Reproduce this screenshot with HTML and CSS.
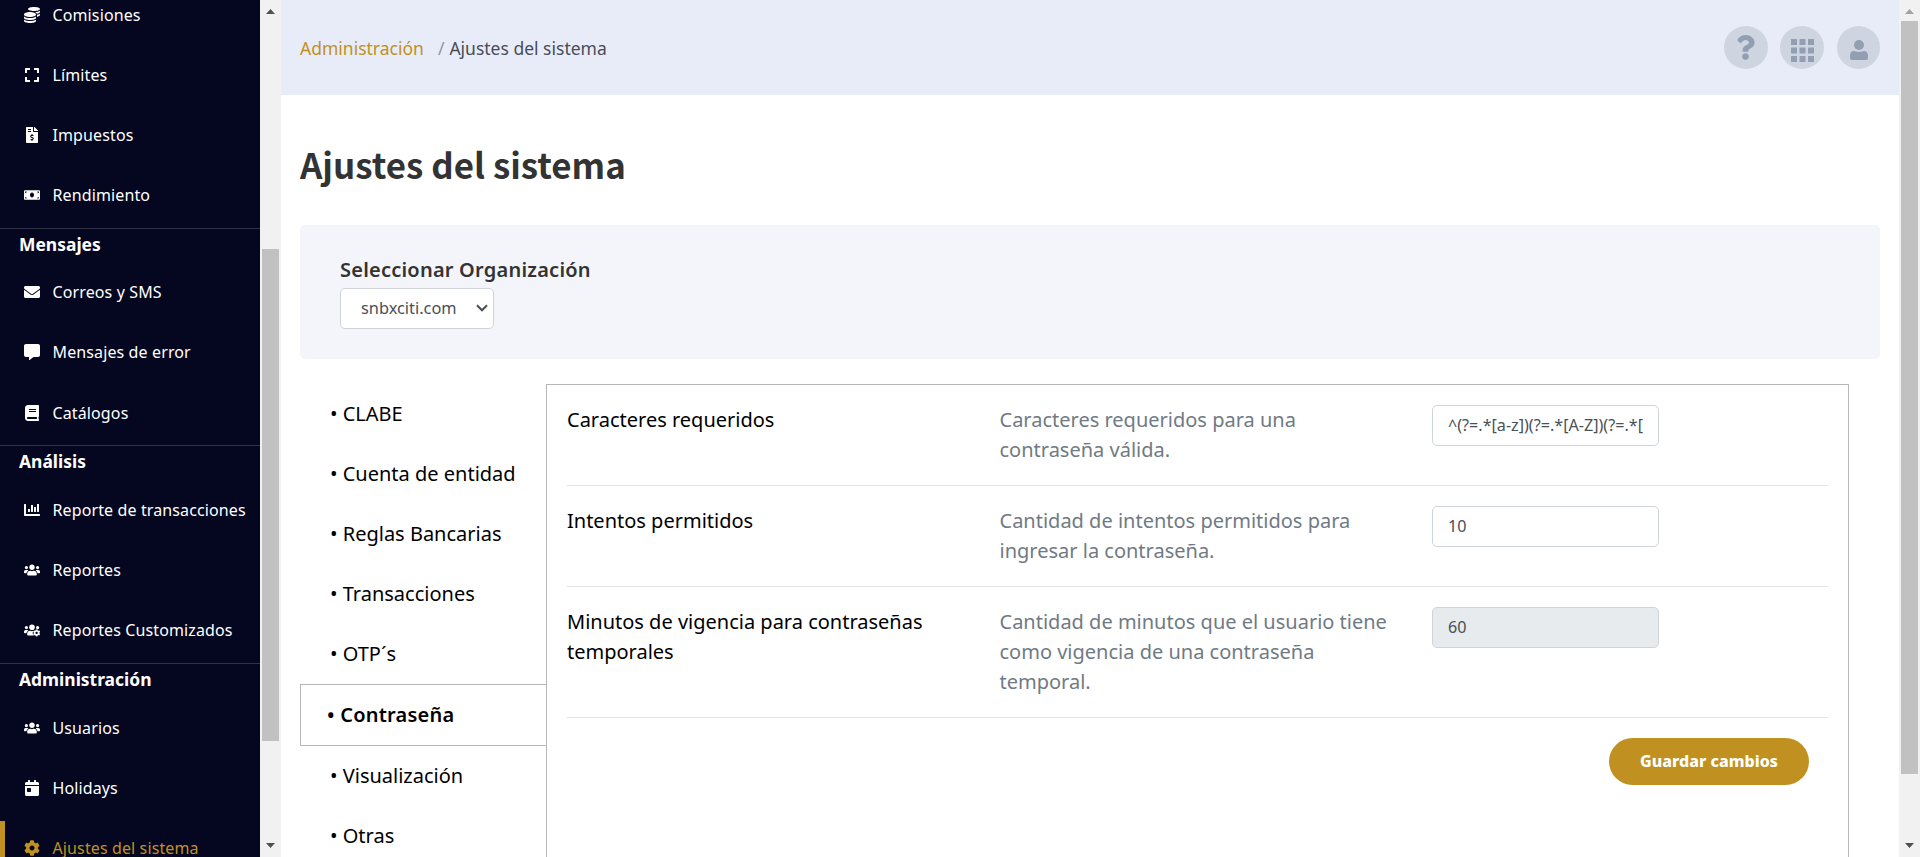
FILE: index.html
```html
<!DOCTYPE html>
<html lang="es">
<head>
<meta charset="utf-8">
<title>Ajustes del sistema</title>
<link rel="stylesheet" href="styles.css">
</head>
<body>
<svg class="defs" aria-hidden="true">
  <symbol id="coins" viewBox="0 0 512 512"><path d="M0 405.3V448c0 35.3 86 64 192 64s192-28.700 192-64v-42.700C342.700 434.400 267.200 448 192 448S41.300 434.400 0 405.300zM320 128c106 0 192-28.700 192-64S426 0 320 0 128 28.700 128 64s86 64 192 64zM0 300.400V352c0 35.300 86 64 192 64s192-28.700 192-64v-51.600c-41.300 34-116.900 51.600-192 51.600S41.300 334.400 0 300.400zm416 11c57.300-11.100 96-31.700 96-55.400v-42.700c-23.200 16.400-57.300 27.600-96 34.500v63.600zM192 160C86 160 0 195.800 0 240s86 80 192 80 192-35.800 192-80-86-80-192-80zm219.300 56.300c60-10.800 100.700-32 100.700-56.300v-42.700c-35.500 25.100-96.500 38.600-160.700 41.800 29.500 14.300 51.200 33.500 60 57.200z"/></symbol>
  <symbol id="expand" viewBox="0 0 448 512"><path d="M0 180V56c0-13.300 10.700-24 24-24h124c6.600 0 12 5.400 12 12v40c0 6.600-5.400 12-12 12H64v84c0 6.600-5.400 12-12 12H12c-6.600 0-12-5.400-12-12zM288 44v40c0 6.600 5.400 12 12 12h84v84c0 6.600 5.400 12 12 12h40c6.600 0 12-5.400 12-12V56c0-13.300-10.700-24-24-24H300c-6.600 0-12 5.400-12 12zm148 276h-40c-6.600 0-12 5.400-12 12v84h-84c-6.600 0-12 5.400-12 12v40c0 6.600 5.400 12 12 12h124c13.300 0 24-10.700 24-24V332c0-6.600-5.400-12-12-12zM160 468v-40c0-6.600-5.400-12-12-12H64v-84c0-6.600-5.400-12-12-12H12c-6.600 0-12 5.400-12 12v124c0 13.300 10.700 24 24 24h124c6.600 0 12-5.400 12-12z"/></symbol>
  <symbol id="invoice" viewBox="0 0 384 512"><path d="M377 105L279.100 7c-4.500-4.500-10.600-7-17-7H256v128h128v-6.100c0-6.300-2.500-12.400-7-16.900zm-153 31V0H24C10.700 0 0 10.700 0 24v464c0 13.300 10.700 24 24 24h336c13.300 0 24-10.700 24-24V160H248c-13.200 0-24-10.800-24-24zM64 72c0-4.420 3.580-8 8-8h80c4.420 0 8 3.580 8 8v16c0 4.420-3.580 8-8 8H72c-4.420 0-8-3.580-8-8V72zm0 80v-16c0-4.420 3.580-8 8-8h80c4.420 0 8 3.580 8 8v16c0 4.420-3.580 8-8 8H72c-4.420 0-8-3.580-8-8zm144 263.880V440c0 4.420-3.580 8-8 8h-16c-4.420 0-8-3.580-8-8v-24.290c-11.290-.58-22.270-4.520-31.370-11.350-3.900-2.930-4.100-8.770-.57-12.140l11.750-11.210c2.770-2.640 6.890-2.760 10.130-.73 3.870 2.420 8.260 3.720 12.820 3.720h28.110c6.500 0 11.800-5.920 11.800-13.190 0-5.950-3.610-11.190-8.770-12.730l-45-13.500c-18.590-5.580-31.580-23.420-31.580-43.390 0-24.520 19.050-44.440 42.670-45.070V232c0-4.420 3.580-8 8-8h16c4.420 0 8 3.580 8 8v24.290c11.290.58 22.270 4.510 31.370 11.350 3.900 2.930 4.100 8.770.57 12.140l-11.750 11.210c-2.770 2.640-6.890 2.760-10.130.73-3.870-2.430-8.260-3.720-12.820-3.720h-28.110c-6.500 0-11.800 5.920-11.800 13.190 0 5.950 3.610 11.190 8.770 12.730l45 13.500c18.590 5.580 31.580 23.420 31.580 43.390 0 24.530-19.050 44.440-42.670 45.070z"/></symbol>
  <symbol id="money" viewBox="0 0 640 512"><path d="M608 64H32C14.330 64 0 78.330 0 96v320c0 17.670 14.330 32 32 32h576c17.670 0 32-14.330 32-32V96c0-17.670-14.330-32-32-32zM48 400v-64c35.350 0 64 28.650 64 64H48zm0-224v-64h64c0 35.350-28.650 64-64 64zm272 176c-44.190 0-80-42.990-80-96 0-53.020 35.820-96 80-96s80 42.980 80 96c0 53.030-35.830 96-80 96zm272 48h-64c0-35.350 28.650-64 64-64v64zm0-224c-35.350 0-64-28.650-64-64h64v64z"/></symbol>
  <symbol id="envelope" viewBox="0 0 512 512"><path d="M502.300 190.800c3.900-3.100 9.700-.2 9.700 4.700V400c0 26.500-21.500 48-48 48H48c-26.500 0-48-21.500-48-48V195.600c0-5 5.700-7.800 9.700-4.700 22.400 17.400 52.100 39.500 154.100 113.600 21.100 15.400 56.700 47.800 92.200 47.600 35.700.3 72-32.800 92.300-47.600 102-74.100 131.600-96.300 154-113.700zM256 320c23.200.4 56.600-29.200 73.400-41.400 132.700-96.300 142.800-104.700 173.400-128.700 5.800-4.500 9.200-11.500 9.200-18.900v-19c0-26.500-21.500-48-48-48H48c-26.500 0-48 21.500-48 48v19c0 7.400 3.400 14.300 9.200 18.900 30.600 23.900 40.700 32.400 173.400 128.700 16.800 12.200 50.200 41.800 73.400 41.400z"/></symbol>
  <symbol id="comment" viewBox="0 0 512 512"><path d="M448 0H64C28.700 0 0 28.700 0 64v288c0 35.300 28.700 64 64 64h96v84c0 9.800 11.200 15.500 19.100 9.700L304 416h144c35.300 0 64-28.700 64-64V64c0-35.300-28.700-64-64-64z"/></symbol>
  <symbol id="book" viewBox="0 0 448 512"><path d="M448 360V24c0-13.300-10.700-24-24-24H96C43 0 0 43 0 96v320c0 53 43 96 96 96h328c13.300 0 24-10.700 24-24v-16c0-7.500-3.500-14.300-8.900-18.700-4.200-15.400-4.200-59.300 0-74.700 5.400-4.300 8.900-11.100 8.900-18.600zM128 134c0-3.300 2.700-6 6-6h212c3.300 0 6 2.700 6 6v20c0 3.300-2.700 6-6 6H134c-3.300 0-6-2.700-6-6v-20zm0 64c0-3.300 2.700-6 6-6h212c3.300 0 6 2.700 6 6v20c0 3.300-2.700 6-6 6H134c-3.300 0-6-2.700-6-6v-20zm253.400 250H96c-17.700 0-32-14.300-32-32 0-17.600 14.400-32 32-32h285.400c-1.900 17.100-1.900 46.900 0 64z"/></symbol>
  <symbol id="chart" viewBox="0 0 512 512"><path d="M332.800 320h38.400c6.400 0 12.800-6.400 12.800-12.800V172.800c0-6.400-6.400-12.800-12.800-12.800h-38.400c-6.400 0-12.800 6.400-12.800 12.800v134.400c0 6.400 6.400 12.800 12.800 12.800zm96 0h38.400c6.400 0 12.800-6.400 12.800-12.800V76.800c0-6.400-6.400-12.800-12.800-12.800h-38.400c-6.400 0-12.800 6.400-12.800 12.800v230.400c0 6.400 6.400 12.800 12.800 12.800zm-288 0h38.400c6.400 0 12.800-6.400 12.800-12.800v-70.400c0-6.400-6.400-12.800-12.800-12.800h-38.400c-6.400 0-12.800 6.400-12.800 12.800v70.400c0 6.400 6.400 12.800 12.800 12.800zm96 0h38.400c6.400 0 12.800-6.400 12.800-12.800V108.800c0-6.400-6.400-12.800-12.800-12.800h-38.400c-6.400 0-12.800 6.400-12.800 12.800v198.400c0 6.400 6.400 12.800 12.800 12.800zM496 384H64V80c0-8.840-7.160-16-16-16H16C7.160 64 0 71.160 0 80v336c0 17.670 14.330 32 32 32h464c8.840 0 16-7.160 16-16v-32c0-8.840-7.160-16-16-16z"/></symbol>
  <symbol id="users" viewBox="0 0 640 512"><path d="M96 224c35.300 0 64-28.700 64-64s-28.700-64-64-64-64 28.700-64 64 28.700 64 64 64zm448 0c35.300 0 64-28.700 64-64s-28.700-64-64-64-64 28.700-64 64 28.700 64 64 64zm32 32h-64c-17.600 0-33.500 7.100-45.100 18.600 40.300 22.100 68.900 62 75.100 109.400h66c17.700 0 32-14.300 32-32v-32c0-35.300-28.700-64-64-64zm-256 0c61.900 0 112-50.100 112-112S381.900 32 320 32 208 82.100 208 144s50.100 112 112 112zm76.800 32h-8.300c-20.800 10-43.900 16-68.500 16s-47.600-6-68.500-16h-8.300C179.600 288 128 339.600 128 403.200V432c0 26.500 21.500 48 48 48h288c26.500 0 48-21.500 48-48v-28.800c0-63.600-51.600-115.200-115.200-115.200zm-223.700-13.400C161.500 263.100 145.600 256 128 256H64c-35.300 0-64 28.700-64 64v32c0 17.700 14.300 32 32 32h65.900c6.300-47.400 34.900-87.300 75.200-109.400z"/></symbol>
  <symbol id="cog" viewBox="0 0 512 512"><path d="M487.400 315.700l-42.600-24.600c4.300-23.200 4.300-47 0-70.200l42.600-24.600c4.900-2.800 7.100-8.600 5.500-14-11.100-35.600-30-67.800-54.700-94.600-3.800-4.100-10-5.100-14.800-2.300L380.800 110c-17.900-15.400-38.500-27.300-60.800-35.100V25.800c0-5.600-3.900-10.500-9.400-11.700-36.700-8.200-74.300-7.800-109.200 0-5.500 1.200-9.400 6.100-9.400 11.700V75c-22.200 7.900-42.800 19.800-60.800 35.100L88.700 85.500c-4.900-2.800-11-1.900-14.800 2.300-24.700 26.700-43.600 58.900-54.700 94.600-1.700 5.400.6 11.200 5.500 14L67.300 221c-4.300 23.200-4.300 47 0 70.200l-42.600 24.600c-4.900 2.800-7.100 8.600-5.500 14 11.100 35.600 30 67.800 54.700 94.600 3.800 4.100 10 5.100 14.800 2.300l42.600-24.600c17.900 15.400 38.500 27.300 60.800 35.100v49.200c0 5.600 3.900 10.500 9.400 11.700 36.700 8.200 74.300 7.800 109.200 0 5.500-1.200 9.400-6.100 9.400-11.700v-49.200c22.200-7.900 42.800-19.800 60.800-35.100l42.600 24.600c4.900 2.800 11 1.900 14.800-2.300 24.700-26.700 43.600-58.900 54.700-94.600 1.500-5.500-.7-11.300-5.600-14.100zM256 336c-44.100 0-80-35.900-80-80s35.900-80 80-80 80 35.900 80 80-35.900 80-80 80z"/></symbol>
  <symbol id="users-cog" viewBox="0 0 640 512">
    <circle cx="96" cy="160" r="64"/><circle cx="544" cy="160" r="64"/><circle cx="320" cy="144" r="112"/>
    <path d="M173.100 274.600C161.500 263.100 145.600 256 128 256H64c-35.300 0-64 28.700-64 64v32c0 17.700 14.300 32 32 32h65.900c6.300-47.400 34.900-87.300 75.200-109.400zM243.200 288C179.600 288 128 339.600 128 403.200V432c0 26.500 21.500 48 48 48h220l-45-60v-70l40-62c-45 20-100 22-147.800 0z"/>
    <svg x="356" y="222" width="300" height="300" viewBox="0 0 512 512"><use href="#cog"/></svg>
  </symbol>
  <symbol id="calendar" viewBox="0 0 448 512"><path d="M0 464c0 26.500 21.500 48 48 48h352c26.500 0 48-21.500 48-48V192H0v272zm64-192c0-8.800 7.200-16 16-16h96c8.800 0 16 7.200 16 16v96c0 8.800-7.200 16-16 16H80c-8.800 0-16-7.200-16-16v-96zM400 64h-48V16c0-8.800-7.200-16-16-16h-32c-8.800 0-16 7.200-16 16v48H160V16c0-8.800-7.200-16-16-16h-32c-8.800 0-16 7.200-16 16v48H48C21.500 64 0 85.500 0 112v48h448v-48c0-26.500-21.500-48-48-48z"/></symbol>
  <symbol id="question" viewBox="0 0 384 512"><path d="M202.021 0C122.202 0 70.503 32.703 29.914 91.026c-7.363 10.580-5.093 25.086 5.178 32.874l43.138 32.709c10.373 7.865 25.132 6.026 33.253-4.148 25.049-31.381 43.630-49.449 82.757-49.449 30.764 0 68.816 19.799 68.816 49.631 0 22.552-18.617 34.134-48.993 51.164-35.423 19.860-82.299 44.576-82.299 106.405V320c0 13.255 10.745 24 24 24h72.471c13.255 0 24-10.745 24-24v-5.773c0-42.860 125.268-44.645 125.268-160.627C377.504 66.256 286.902 0 202.021 0zM192 373.459c-38.196 0-69.271 31.075-69.271 69.271 0 38.195 31.075 69.270 69.271 69.270s69.271-31.075 69.271-69.271-31.075-69.270-69.271-69.270z"/></symbol>
</svg>

<div class="app">
  <aside class="sidebar">
    <nav class="nav">
      <section class="group group-first">
        <a class="item"><svg><use href="#coins"/></svg>Comisiones</a>
        <a class="item"><svg><use href="#expand"/></svg>Límites</a>
        <a class="item"><svg><use href="#invoice"/></svg>Impuestos</a>
        <a class="item"><svg><use href="#money"/></svg>Rendimiento</a>
      </section>
      <section class="group group-messages">
        <h2>Mensajes</h2>
        <a class="item"><svg><use href="#envelope"/></svg>Correos y SMS</a>
        <a class="item"><svg><use href="#comment"/></svg>Mensajes de error</a>
        <a class="item"><svg><use href="#book"/></svg>Catálogos</a>
      </section>
      <section class="group group-analysis">
        <h2>Análisis</h2>
        <a class="item"><svg><use href="#chart"/></svg>Reporte de transacciones</a>
        <a class="item"><svg><use href="#users"/></svg>Reportes</a>
        <a class="item"><svg><use href="#users-cog"/></svg>Reportes Customizados</a>
      </section>
      <section class="group group-admin">
        <h2>Administración</h2>
        <a class="item"><svg><use href="#users"/></svg>Usuarios</a>
        <a class="item"><svg><use href="#calendar"/></svg>Holidays</a>
        <a class="item active"><svg><use href="#cog"/></svg>Ajustes del sistema</a>
      </section>
    </nav>
  </aside>
  <div class="scrollbar scrollbar-nav">
    <svg class="arrow" viewBox="0 0 9 5"><path d="M0 5L4.500 0 9 5z"/></svg>
    <div class="thumb"></div>
    <svg class="arrow" viewBox="0 0 9 5"><path d="M0 0L4.500 5 9 0z"/></svg>
  </div>

  <main class="main">
    <header class="topbar">
      <div class="crumbs"><a>Administración</a><span class="sep">/</span><span>Ajustes del sistema</span></div>
      <div class="actions">
        <button class="round"><svg class="ic-question"><use href="#question"/></svg></button>
        <button class="round"><svg class="ic-grid" viewBox="0 0 23 23"><path d="M0 0h6v6H0zM8.500 0h6v6h-6zM17 0h6v6h-6zM0 8.500h6v6H0zM8.500 8.500h6v6h-6zM17 8.500h6v6h-6zM0 17h6v6H0zM8.500 17h6v6h-6zM17 17h6v6h-6z"/></svg></button>
        <button class="round round-user"><svg class="ic-user" viewBox="0 0 18 20"><circle cx="9" cy="5" r="5"/><path d="M4 11C5.500 11 6 12 9 12s3.500-1 5-1c2.500 0 4 2 4 4.500V18q0 2-2 2H2q-2 0-2-2v-2.500C0 13 1.500 11 4 11z"/></svg></button>
      </div>
    </header>

    <div class="content">
      <h1>Ajustes del sistema</h1>
      <div class="card">
        <label>Seleccionar Organización</label>
        <div class="select">snbxciti.com<svg viewBox="0 0 12 8"><path d="M1 1.300L6 6.300 11 1.300"/></svg></div>
      </div>
      <div class="settings">
        <ul class="tabs">
          <li>• CLABE</li>
          <li>• Cuenta de entidad</li>
          <li>• Reglas Bancarias</li>
          <li>• Transacciones</li>
          <li>• OTP´s</li>
          <li class="current">• Contraseña</li>
          <li>• Visualización</li>
          <li>• Otras</li>
        </ul>
        <div class="panel">
          <div class="row">
            <div class="name">Caracteres requeridos</div>
            <div class="desc">Caracteres requeridos para una contraseña válida.</div>
            <div><input value="^(?=.*[a-z])(?=.*[A-Z])(?=.*["></div>
          </div>
          <div class="row">
            <div class="name">Intentos permitidos</div>
            <div class="desc">Cantidad de intentos permitidos para ingresar la contraseña.</div>
            <div><input value="10"></div>
          </div>
          <div class="row">
            <div class="name">Minutos de vigencia para contraseñas temporales</div>
            <div class="desc">Cantidad de minutos que el usuario tiene como vigencia de una contraseña temporal.</div>
            <div><input value="60" disabled></div>
          </div>
          <div class="footer"><button class="save">Guardar cambios</button></div>
        </div>
      </div>
    </div>
  </main>
  <div class="scrollbar scrollbar-page">
    <svg class="arrow idle" viewBox="0 0 9 5"><path d="M0 5L4.500 0 9 5z"/></svg>
    <div class="thumb"></div>
    <svg class="arrow" viewBox="0 0 9 5"><path d="M0 0L4.500 5 9 0z"/></svg>
  </div>
</div>
</body>
</html>
```
FILE: styles.css
```css
* { box-sizing: border-box; }
body {
  margin: 0;
  font-family: "Noto Sans", "Open Sans", sans-serif;
  color: #000;
  background: #fff;
  overflow: hidden;
}
.defs { display: none; }
.app { display: flex; height: 857px; overflow: hidden; }

/* Side navigation */
.sidebar { width: 260px; flex: none; background: #050721; color: #fff; overflow: hidden; }
.nav { margin-top: -13px; }
.group { border-top: 1px solid #303145; }
.group-first { border-top: 0; padding-bottom: 1px; }
.group h2 { margin: 0; height: 36px; padding-left: 19px; font-size: 17.450px; line-height: 31px; font-weight: 700; }
.group-messages h2 { height: 35px; }
.group-admin h2 { height: 37px; }
.item {
  display: flex;
  align-items: center;
  gap: 12.500px;
  height: 60px;
  padding: 0 0 5px 24px;
  font-size: 16px;
  letter-spacing: 0.120px;
  line-height: 22px;
  white-space: nowrap;
}
.group-messages .item:last-child,
.group-analysis .item:last-child { height: 61px; }
.group-messages .item:last-child { padding-bottom: 4px; }
.group-admin .item { padding-bottom: 7px; }
.item svg { width: 16px; height: 16px; fill: currentColor; flex: none; }
.item.active { color: #c09120; border-left: 5px solid #c09120; padding-left: 19px; }

/* Scrollbars */
.scrollbar {
  width: 21px;
  flex: none;
  display: flex;
  flex-direction: column;
  align-items: center;
  padding: 9px 0;
  background: #f1f1f1;
}
.arrow { width: 9px; height: 5px; fill: #505050; flex: none; }
.arrow:last-child { margin-top: auto; }
.arrow.idle { fill: #a3a3a3; }
.thumb { width: 17px; background: #c1c1c1; }
.scrollbar-nav .thumb { margin-top: 235px; height: 492px; }
.scrollbar-page .thumb { margin-top: 7px; height: 753px; }

/* Page */
.main { flex: 1; min-width: 0; overflow: hidden; }
.topbar {
  display: flex;
  justify-content: space-between;
  align-items: center;
  height: 95px;
  padding: 0 19px;
  background: #e8ecf8;
}
.crumbs { display: flex; font-size: 17.500px; line-height: 28px; color: #4a4d57; }
.crumbs a { color: #c09120; }
.sep { margin: 0 5px 0 14px; color: #8d97a8; }
.actions { display: flex; gap: 12px; }
.round {
  display: flex;
  justify-content: center;
  align-items: center;
  width: 44px;
  height: 43px;
  padding: 0;
  border: 0;
  border-radius: 50%;
  background: #ced5e1;
}
.round-user { width: 43px; margin-left: 1px; }
.round svg { fill: #929eb1; }
.ic-question { width: 19px; height: 25px; margin-right: 1px; }
.ic-grid { width: 23px; height: 23px; margin-top: 5px; }
.ic-user { width: 18px; height: 20px; margin: 5px 0 0 1px; }

.content { padding: 0 19px; }
h1 {
  margin: 0;
  padding-top: 43px;
  height: 130px;
  font-family: "Noto Sans CJK SC", "Noto Sans", sans-serif;
  font-size: 34.900px;
  line-height: 52px;
  font-weight: 600;
  color: #333;
}
.card { height: 134px; padding: 30px 40px 0; border-radius: 5px; background: #f4f5fb; }
.card label { display: block; font-size: 20px; line-height: 30px; font-weight: 600; letter-spacing: 0.220px; color: #333; margin-bottom: 3px; }
.select {
  display: flex;
  align-items: center;
  justify-content: space-between;
  width: 154px;
  height: 41px;
  padding: 0 5px 2px 20px;
  border: 1px solid #ced4da;
  border-radius: 5px;
  background: #fff;
  color: #495057;
  font-size: 16.350px;
}
.select svg { width: 12px; height: 8px; fill: none; stroke: #495057; stroke-width: 2; }

.settings { display: flex; padding-top: 25px; }
.tabs { list-style: none; width: 246px; flex: none; margin: 0; padding: 0; font-size: 20px; line-height: 30px; }
.tabs li { padding: 15px 0 15px 30px; }
.tabs .current { padding-left: 26px; border: 1px solid #b5b6b8; border-right: 0; font-weight: 600; letter-spacing: 0.220px; }
.panel { width: 1303px; height: 560px; padding: 0 20px; border: 1px solid #b5b6b8; }
.row {
  display: grid;
  grid-template-columns: 393px 393px 227px;
  column-gap: 39.500px;
  padding: 20px 0;
  border-bottom: 1px solid #e4e5e7;
  font-size: 20px;
  line-height: 30px;
}
.desc { color: #707a84; }
.row input {
  display: block;
  width: 227px;
  height: 41px;
  padding: 0 15px 1px;
  border: 1px solid #ced4da;
  border-radius: 5px;
  background: #fff;
  color: #495057;
  font: 16.150px "Noto Sans", sans-serif;
}
.row input:disabled { background: #e7ebee; }
.footer { display: flex; justify-content: flex-end; padding: 20px 19px 0; }
.save {
  width: 200px;
  height: 47px;
  padding: 0 0 2px;
  border: 0;
  border-radius: 24px;
  background: #c09120;
  color: #fff;
  font: 800 16px "Noto Sans", sans-serif;
}
```
